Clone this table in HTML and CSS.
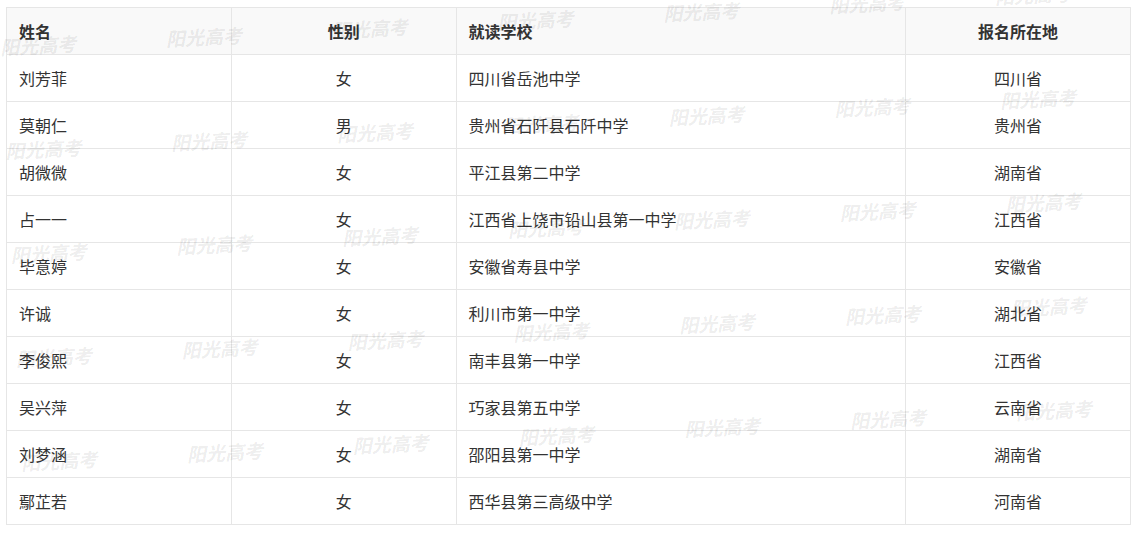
FILE: index.html
```html
<!DOCTYPE html>
<html lang="zh-CN">
<head>
<meta charset="utf-8">
<title>名单</title>
<link rel="stylesheet" href="styles.css">
</head>
<body>
<div class="page">
  <table class="list">
    <colgroup>
      <col class="c-name"><col class="c-sex"><col class="c-school"><col class="c-place">
    </colgroup>
    <thead>
      <tr><th class="left">姓名</th><th>性别</th><th class="left">就读学校</th><th>报名所在地</th></tr>
    </thead>
    <tbody>
      <tr><td>刘芳菲</td><td class="center">女</td><td>四川省岳池中学</td><td class="center">四川省</td></tr>
      <tr><td>莫朝仁</td><td class="center">男</td><td>贵州省石阡县石阡中学</td><td class="center">贵州省</td></tr>
      <tr><td>胡微微</td><td class="center">女</td><td>平江县第二中学</td><td class="center">湖南省</td></tr>
      <tr><td>占一一</td><td class="center">女</td><td>江西省上饶市铅山县第一中学</td><td class="center">江西省</td></tr>
      <tr><td>毕意婷</td><td class="center">女</td><td>安徽省寿县中学</td><td class="center">安徽省</td></tr>
      <tr><td>许诚</td><td class="center">女</td><td>利川市第一中学</td><td class="center">湖北省</td></tr>
      <tr><td>李俊熙</td><td class="center">女</td><td>南丰县第一中学</td><td class="center">江西省</td></tr>
      <tr><td>吴兴萍</td><td class="center">女</td><td>巧家县第五中学</td><td class="center">云南省</td></tr>
      <tr><td>刘梦涵</td><td class="center">女</td><td>邵阳县第一中学</td><td class="center">湖南省</td></tr>
      <tr><td>鄢芷若</td><td class="center">女</td><td>西华县第三高级中学</td><td class="center">河南省</td></tr>
    </tbody>
  </table>
  <div class="watermarks" aria-hidden="true">
    <span>阳光高考</span><span>阳光高考</span><span>阳光高考</span><span>阳光高考</span><span>阳光高考</span><span>阳光高考</span><span>阳光高考</span>
    <span>阳光高考</span><span>阳光高考</span><span>阳光高考</span><span>阳光高考</span><span>阳光高考</span><span>阳光高考</span><span>阳光高考</span>
    <span>阳光高考</span><span>阳光高考</span><span>阳光高考</span><span>阳光高考</span><span>阳光高考</span><span>阳光高考</span><span>阳光高考</span>
    <span>阳光高考</span><span>阳光高考</span><span>阳光高考</span><span>阳光高考</span><span>阳光高考</span><span>阳光高考</span><span>阳光高考</span>
    <span>阳光高考</span><span>阳光高考</span><span>阳光高考</span><span>阳光高考</span><span>阳光高考</span><span>阳光高考</span><span>阳光高考</span>
  </div>
</div>
</body>
</html>
```

FILE: styles.css
```css
html, body {
  margin: 0;
  padding: 0;
  background: #fff;
  overflow: hidden;
}

.page {
  position: relative;
  width: 1138px;
  height: 535px;
  padding: 7px 0 0 6px;
  box-sizing: border-box;
  font-family: "Noto Sans CJK SC", "Liberation Sans", sans-serif;
  color: #333;
}

.list {
  width: 1125px;
  border-collapse: collapse;
  table-layout: fixed;
  border: 1px solid #e6e6e6;
  font-size: 16px;
  line-height: 20px;
}

.c-name, .c-sex, .c-place { width: 20%; }
.c-school { width: 40%; }

.list th,
.list td {
  height: 47px;
  padding: 0 12px;
  border: 1px solid #e6e6e6;
  text-align: left;
  vertical-align: middle;
  white-space: nowrap;
  box-sizing: border-box;
}

.list th {
  background: #f9f9f9;
  font-weight: 700;
  text-align: center;
  color: #333;
}

.list th.left { text-align: left; }
.list td.center { text-align: center; }

.watermarks {
  position: absolute;
  left: -45px;
  top: -8px;
  display: grid;
  grid-template-columns: repeat(7, 166px);
  grid-auto-rows: 104px;
  transform-origin: 83px 52px;
  transform: rotate(-2.9deg);
  pointer-events: none;
}

.watermarks span {
  display: flex;
  align-items: center;
  justify-content: center;
  font-family: "Noto Sans CJK SC", sans-serif;
  font-size: 19px;
  font-weight: 700;
  font-style: italic;
  color: rgba(0, 0, 0, 0.085);
  white-space: nowrap;
}
```
